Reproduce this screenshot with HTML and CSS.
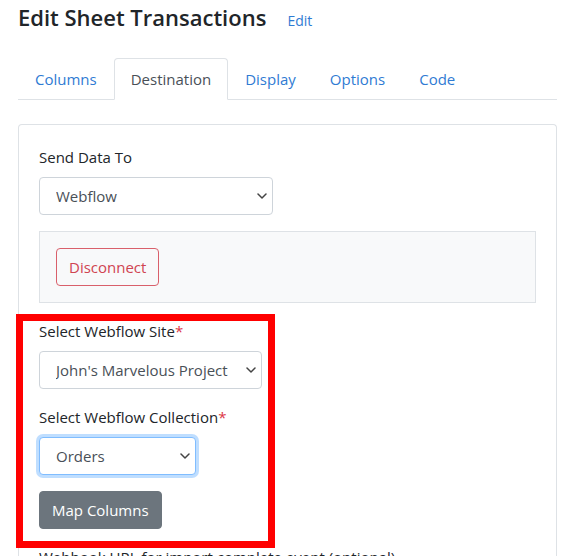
FILE: index.html
```html
<!DOCTYPE html>
<html>
<head>
<meta charset="utf-8">
<link rel="stylesheet" href="styles.css">
</head>
<body>
<div class="page">
  <div class="title-row">
    <h1 class="title">Edit Sheet Transactions</h1>
    <a class="edit-link">Edit</a>
  </div>
  <ul class="tabs">
    <li class="tab">Columns</li>
    <li class="tab active">Destination</li>
    <li class="tab">Display</li>
    <li class="tab">Options</li>
    <li class="tab">Code</li>
  </ul>
  <div class="card">
    <div class="card-body">
      <div class="field">
        <label class="label">Send Data To</label>
        <select class="select sel-dest"><option>Webflow</option></select>
      </div>
      <div class="well">
        <button class="btn btn-danger-outline">Disconnect</button>
      </div>
      <div class="highlight-group">
        <div class="field">
          <label class="label">Select Webflow Site<span class="req">*</span></label>
          <select class="select sel-site"><option>John's Marvelous Project</option></select>
        </div>
        <div class="field">
          <label class="label">Select Webflow Collection<span class="req">*</span></label>
          <select class="select sel-coll focus"><option>Orders</option></select>
        </div>
        <button class="btn btn-secondary">Map Columns</button>
        <div class="annotation"></div>
      </div>
      <div class="field">
        <label class="label">Webhook URL for import complete event (optional)</label>
      </div>
    </div>
  </div>
</div>
</body>
</html>
```
FILE: styles.css
```css
* { box-sizing: border-box; }
html, body { margin: 0; padding: 0; background: #fff; }
body {
  font-family: "Open Sans", "Noto Sans", "Liberation Sans", sans-serif;
  font-size: 15px;
  line-height: 24px;
  color: #212529;
}
.page {
  padding: 0 8px 0 18px;
  width: 565px;
}
.title-row {
  display: flex;
  align-items: baseline;
  gap: 21px;
  padding-top: 2px;
  height: 58px;
}
.title {
  margin: 0;
  font-size: 22px;
  font-weight: 600;
  line-height: 30px;
  color: #212529;
}
.edit-link {
  font-size: 14px;
  color: #2f7bd3;
}
.tabs {
  list-style: none;
  margin: 0;
  padding: 0;
  display: flex;
  border-bottom: 1px solid #dee2e6;
}
.tab {
  padding: 8px 16px;
  line-height: 24px;
  border: 1px solid transparent;
  border-top-left-radius: 4px;
  border-top-right-radius: 4px;
  margin-bottom: -1px;
  color: #2f7bd3;
}
.tab.active {
  color: #495057;
  background: #fff;
  border-color: #dee2e6 #dee2e6 #fff;
}
.card {
  margin-top: 24px;
  border: 1px solid #dee2e6;
  border-radius: 4px;
  border-bottom: none;
  border-bottom-left-radius: 0;
  border-bottom-right-radius: 0;
}
.card-body {
  padding: 20px 20px 0;
  display: flex;
  flex-direction: column;
  align-items: flex-start;
}
.field {
  display: flex;
  flex-direction: column;
  align-items: flex-start;
  margin-bottom: 16px;
}
.label {
  display: block;
  margin-bottom: 8px;
  line-height: 24px;
  color: #212529;
}
.req { color: #dc3545; }
.select {
  -webkit-appearance: none;
  appearance: none;
  height: 38px;
  font-family: inherit;
  font-size: 15px;
  color: #495057;
  padding: 6px 22px 6px 16px;
  border: 1px solid #ced4da;
  border-radius: 4px;
  background: #fff url("data:image/svg+xml,%3Csvg xmlns='http://www.w3.org/2000/svg' width='10' height='6' viewBox='0 0 10 6'%3E%3Cpath d='M1 1l4 4 4-4' fill='none' stroke='%23444' stroke-width='1.5' stroke-linecap='round' stroke-linejoin='round'/%3E%3C/svg%3E") no-repeat right 5px center;
  outline: none;
}
.sel-dest { width: 234px; }
.sel-site { width: 223px; }
.sel-coll { width: 157px; }
.select.focus {
  border-color: #80bdff;
  box-shadow: 0 0 0 3px rgba(0, 123, 255, 0.25);
}
.well {
  align-self: stretch;
  background: #f8f9fa;
  border: 1px solid #dee2e6;
  padding: 16px;
  margin-bottom: 16px;
}
.btn {
  font-family: inherit;
  font-size: 15px;
  line-height: 24px;
  height: 38px;
  padding: 6px 12px;
  border-radius: 4px;
  border: 1px solid transparent;
}
.btn-danger-outline {
  color: #d04451;
  border-color: #d9606b;
  background: transparent;
}
.btn-secondary {
  color: #fff;
  background: #6c757d;
  border-color: #6c757d;
}
.highlight-group {
  position: relative;
  display: flex;
  flex-direction: column;
  align-items: flex-start;
  margin-bottom: 16px;
}
.annotation {
  position: absolute;
  left: -23px;
  top: -5px;
  width: 259px;
  height: 234px;
  border: 7px solid #f00;
  pointer-events: none;
}
```
